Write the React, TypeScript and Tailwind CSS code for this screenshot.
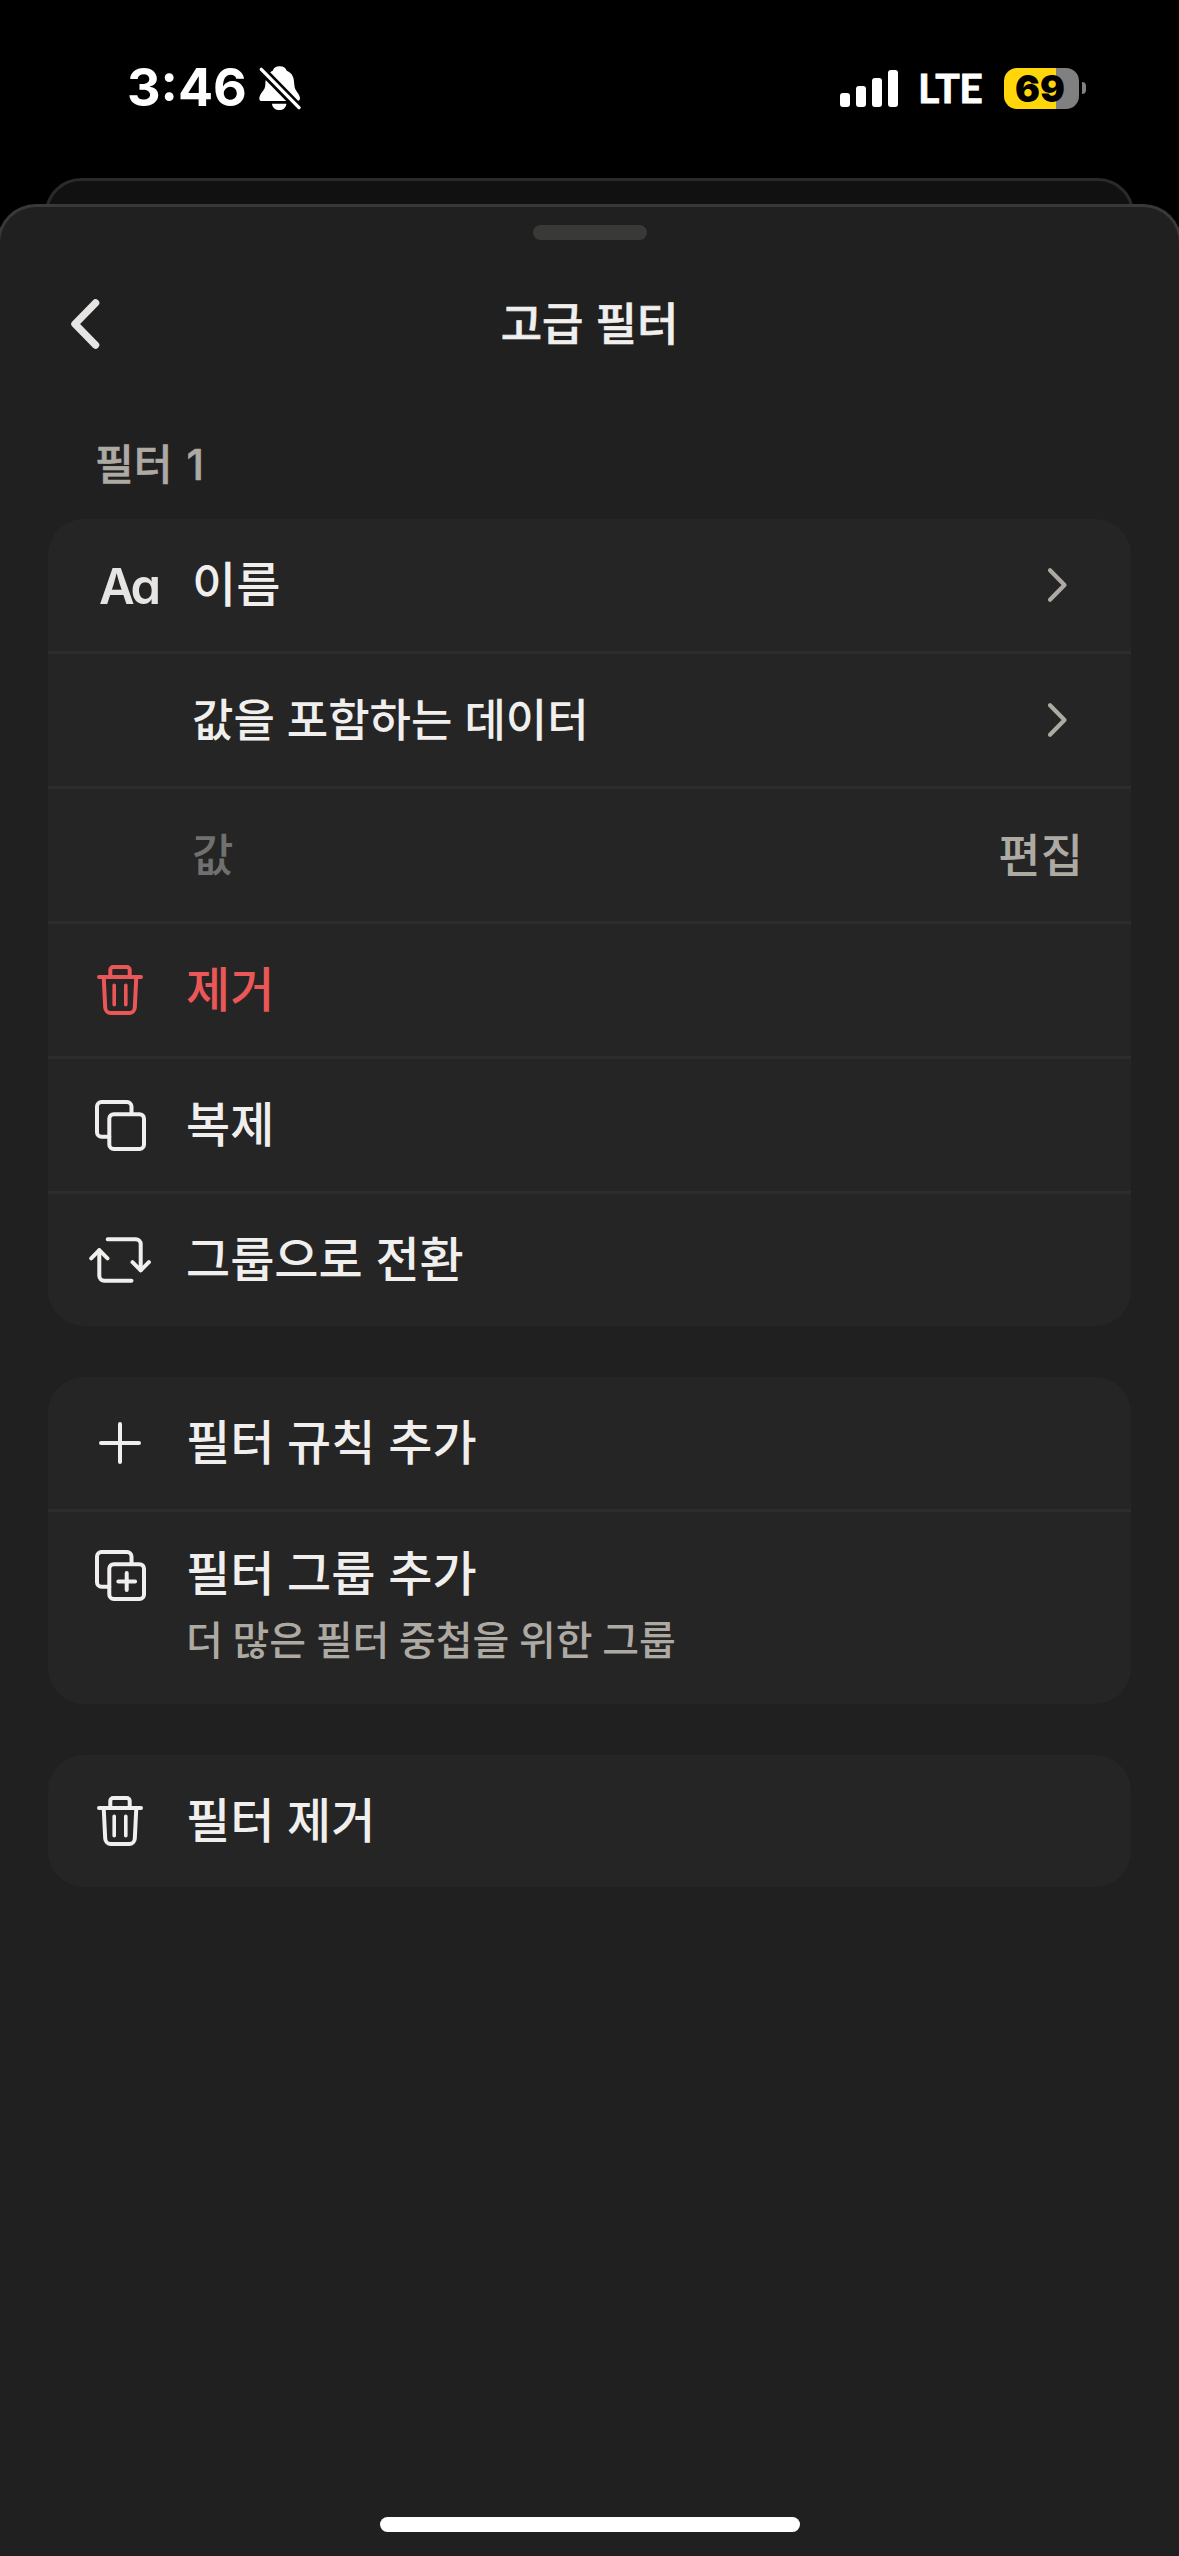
import type { ReactNode } from 'react'

function BellOffIcon() {
  return (
    <svg className="w-[42px] h-[44px]" viewBox="478 78 126 132" fill="none">
      <path
        d="M540 79c-12 0-19 6-21 13-15 7-22 22-22 42 0 18-18 24-18 42 0 5 3 7 8 7h105c6 0 9-3 9-8 0-15-16-20-17-41-1-22-5-35-23-42-2-7-9-13-21-13z"
        fill="#fff"
      />
      <path d="M517 191h43c-1 12-10 19-21 19s-21-7-22-19z" fill="#fff" />
      <path d="M472 75L612 218" stroke="#000" strokeWidth="26" />
      <path d="M485 88L598 203" stroke="#fff" strokeWidth="10" strokeLinecap="round" />
    </svg>
  )
}

function BackIcon() {
  return (
    <svg className="w-[32px] h-[52px]" viewBox="0 0 32 52" fill="none" stroke="#e6e5e3" strokeWidth="7.5" strokeLinecap="round" strokeLinejoin="round">
      <path d="M26.500 5L6 26l20.500 21" />
    </svg>
  )
}

function ChevronIcon() {
  return (
    <svg className="w-[24px] h-[40px] mr-[14px]" viewBox="0 0 24 40" fill="none" stroke="#ada9a3" strokeWidth="4.2" strokeLinecap="round" strokeLinejoin="round">
      <path d="M5 5.200L19.500 20L5 34.800" />
    </svg>
  )
}

function IconBox({ children }: { children: ReactNode }) {
  return (
    <svg className="w-[62px] h-[62px] shrink-0" viewBox="0 0 62 62" fill="none" stroke="currentColor" strokeWidth="4" strokeLinecap="round" strokeLinejoin="round">
      {children}
    </svg>
  )
}

function TrashIcon() {
  return (
    <IconBox>
      <path d="M10 18h42" />
      <path d="M21.300 18v-7a3 3 0 0 1 3-3h13.400a3 3 0 0 1 3 3v7" />
      <path d="M14.700 18l1.500 30.500a5.600 5.600 0 0 0 5.600 5.500h18.400a5.600 5.600 0 0 0 5.600-5.500L47.300 18" />
      <path d="M25.200 26.300v19.400M36.800 26.300v19.400" strokeWidth="3.600" />
    </IconBox>
  )
}

function CopyIcon() {
  return (
    <IconBox>
      <rect x="20.300" y="20.200" width="34.700" height="34.700" rx="4.500" />
      <path d="M42.500 20v-7.500a4.500 4.500 0 0 0-4.500-4.500H12.500a4.500 4.500 0 0 0-4.500 4.500v25.700a4.500 4.500 0 0 0 4.500 4.500h7.800" />
    </IconBox>
  )
}

function ConvertIcon() {
  return (
    <IconBox>
      <path d="M18.700 10.300h28a5 5 0 0 1 5 5v26" />
      <path d="M43.500 33.200l8.200 8.200 8.200-8.200" />
      <path d="M42.500 51.700h-27.200a5 5 0 0 1-5-5V21.300" />
      <path d="M2.200 29.300l8.100-8.100 8.200 8.100" />
    </IconBox>
  )
}

function PlusIcon() {
  return (
    <IconBox>
      <path d="M12 31h38M31 12v38" />
    </IconBox>
  )
}

function CopyPlusIcon() {
  return (
    <IconBox>
      <rect x="20.300" y="20.200" width="34.700" height="34.700" rx="4.500" />
      <path d="M42.500 20v-7.500a4.500 4.500 0 0 0-4.500-4.500H12.500a4.500 4.500 0 0 0-4.500 4.500v25.700a4.500 4.500 0 0 0 4.500 4.500h7.800" />
      <path d="M29.300 37.500h16.800M37.700 29.100v16.800" />
    </IconBox>
  )
}

function StatusBar() {
  return (
    <div className="h-[178px] flex items-start justify-between pl-[127px] pr-[93px] pt-[60px] text-white">
      <div className="flex items-center h-[56px]">
        <span className="text-[52px] leading-[56px] font-bold w-[132px] whitespace-nowrap">3:46</span>
        <BellOffIcon />
      </div>
      <div className="flex items-center h-[56px]">
        <div className="flex items-end gap-[6px] h-[38px]">
          <div className="w-[10px] h-[14px] bg-white rounded-[3px]" />
          <div className="w-[10px] h-[21px] bg-white rounded-[3px]" />
          <div className="w-[10px] h-[29px] bg-white rounded-[3px]" />
          <div className="w-[10px] h-[37px] bg-white rounded-[3px]" />
        </div>
        <span className="ml-[20px] w-[66px] text-[41px] leading-[58px] font-bold tracking-[-0.5px] whitespace-nowrap font-['Lato',sans-serif] [-webkit-text-stroke:0.8px_white]">LTE</span>
        <div className="ml-[20px] w-[75px] h-[41px] rounded-[13px] bg-gradient-to-r from-[#ffd60a] from-[69.5%] to-[#808080] to-[69.5%] flex items-center justify-center">
          <span className="-ml-[3px] text-[37px] leading-[41px] font-black text-black">69</span>
        </div>
        <div className="ml-[3px] w-[4px] h-[12px] rounded-r-full bg-[#808080]" />
      </div>
    </div>
  )
}

function Card({ children }: { children: ReactNode }) {
  return (
    <div className="mx-[48px] rounded-[36px] bg-[#252525] divide-y-[3px] divide-[#2c2c2c] overflow-hidden">
      {children}
    </div>
  )
}

// property, operator and value of the rule
function FieldRow({ icon, label, muted, right }: { icon?: ReactNode; label: string; muted?: boolean; right: ReactNode }) {
  return (
    <div className="h-[132px] box-content flex items-center pl-[51px] pr-[48px]">
      <div className="w-[93px] shrink-0">{icon}</div>
      <span className={`flex-1 ${icon ? 'text-[48px]' : 'text-[45px]'} ${muted ? 'text-[#707070]' : ''}`}>{label}</span>
      {right}
    </div>
  )
}

function ActionRow({ icon, label, danger }: { icon: ReactNode; label: string; danger?: boolean }) {
  return (
    <div className={`h-[132px] box-content flex items-center gap-[35px] pl-[41px] ${danger ? 'text-[#eb5757]' : ''}`}>
      {icon}
      <span className="text-[48px]">{label}</span>
    </div>
  )
}

export default function App() {
  return (
    <div className="w-[1179px] h-[2556px] bg-black flex flex-col overflow-hidden font-medium text-[#f0efed] leading-none font-['Inter','Noto_Sans_CJK_KR',sans-serif]">
      <StatusBar />

      {/* edge of the sheet underneath */}
      <div className="h-[26px] mx-[45px] overflow-hidden shrink-0">
        <div className="h-[80px] rounded-t-[36px] border-[3px] border-[#2a2a29] bg-[#111111]" />
      </div>

      <div className="flex-1 -mx-[3px] rounded-t-[39px] border-[3px] border-b-0 border-[#393938] bg-[#202020] flex flex-col">
        <div className="mt-[18px] mx-auto w-[114px] h-[15px] rounded-full bg-[#393937]" />

        <div className="mt-[36px] h-[96px] grid grid-cols-3 items-center">
          <div className="pl-[69px]">
            <BackIcon />
          </div>
          <h1 className="text-center text-[45px] [-webkit-text-stroke:0.6px_#f0efed]">고급 필터</h1>
        </div>

        <div className="h-[147px] pt-[72px] pl-[95px] text-[42px] text-[#ada9a3] [word-spacing:3px] [-webkit-text-stroke:0.6px_#ada9a3]">필터 1</div>

        <div className="flex flex-col gap-[51px]">
          <Card>
            <FieldRow
              icon={<span className="block pt-[3px] font-semibold text-[49px] tracking-[-3.5px] text-[#e6e5e3] [font-feature-settings:'cv11']">Aa</span>}
              label="이름"
              right={<ChevronIcon />}
            />
            <FieldRow label="값을 포함하는 데이터" right={<ChevronIcon />} />
            <FieldRow label="값" muted right={<span className="text-[46px] text-[#ada9a3]">편집</span>} />
            <ActionRow icon={<TrashIcon />} label="제거" danger />
            <ActionRow icon={<CopyIcon />} label="복제" />
            <ActionRow icon={<ConvertIcon />} label="그룹으로 전환" />
          </Card>

          <Card>
            <ActionRow icon={<PlusIcon />} label="필터 규칙 추가" />
            <div className="h-[160px] box-content flex items-start gap-[35px] pl-[41px] pt-[32px]">
              <CopyPlusIcon />
              <div className="flex flex-col pt-[6px]">
                <span className="text-[48px]">필터 그룹 추가</span>
                <span className="mt-[23px] text-[40px] text-[#ada9a3] [word-spacing:-1px]">더 많은 필터 중첩을 위한 그룹</span>
              </div>
            </div>
          </Card>

          <Card>
            <ActionRow icon={<TrashIcon />} label="필터 제거" />
          </Card>
        </div>

        <div className="mt-auto mb-[24px] mx-auto w-[420px] h-[15px] rounded-full bg-white" />
      </div>
    </div>
  )
}
